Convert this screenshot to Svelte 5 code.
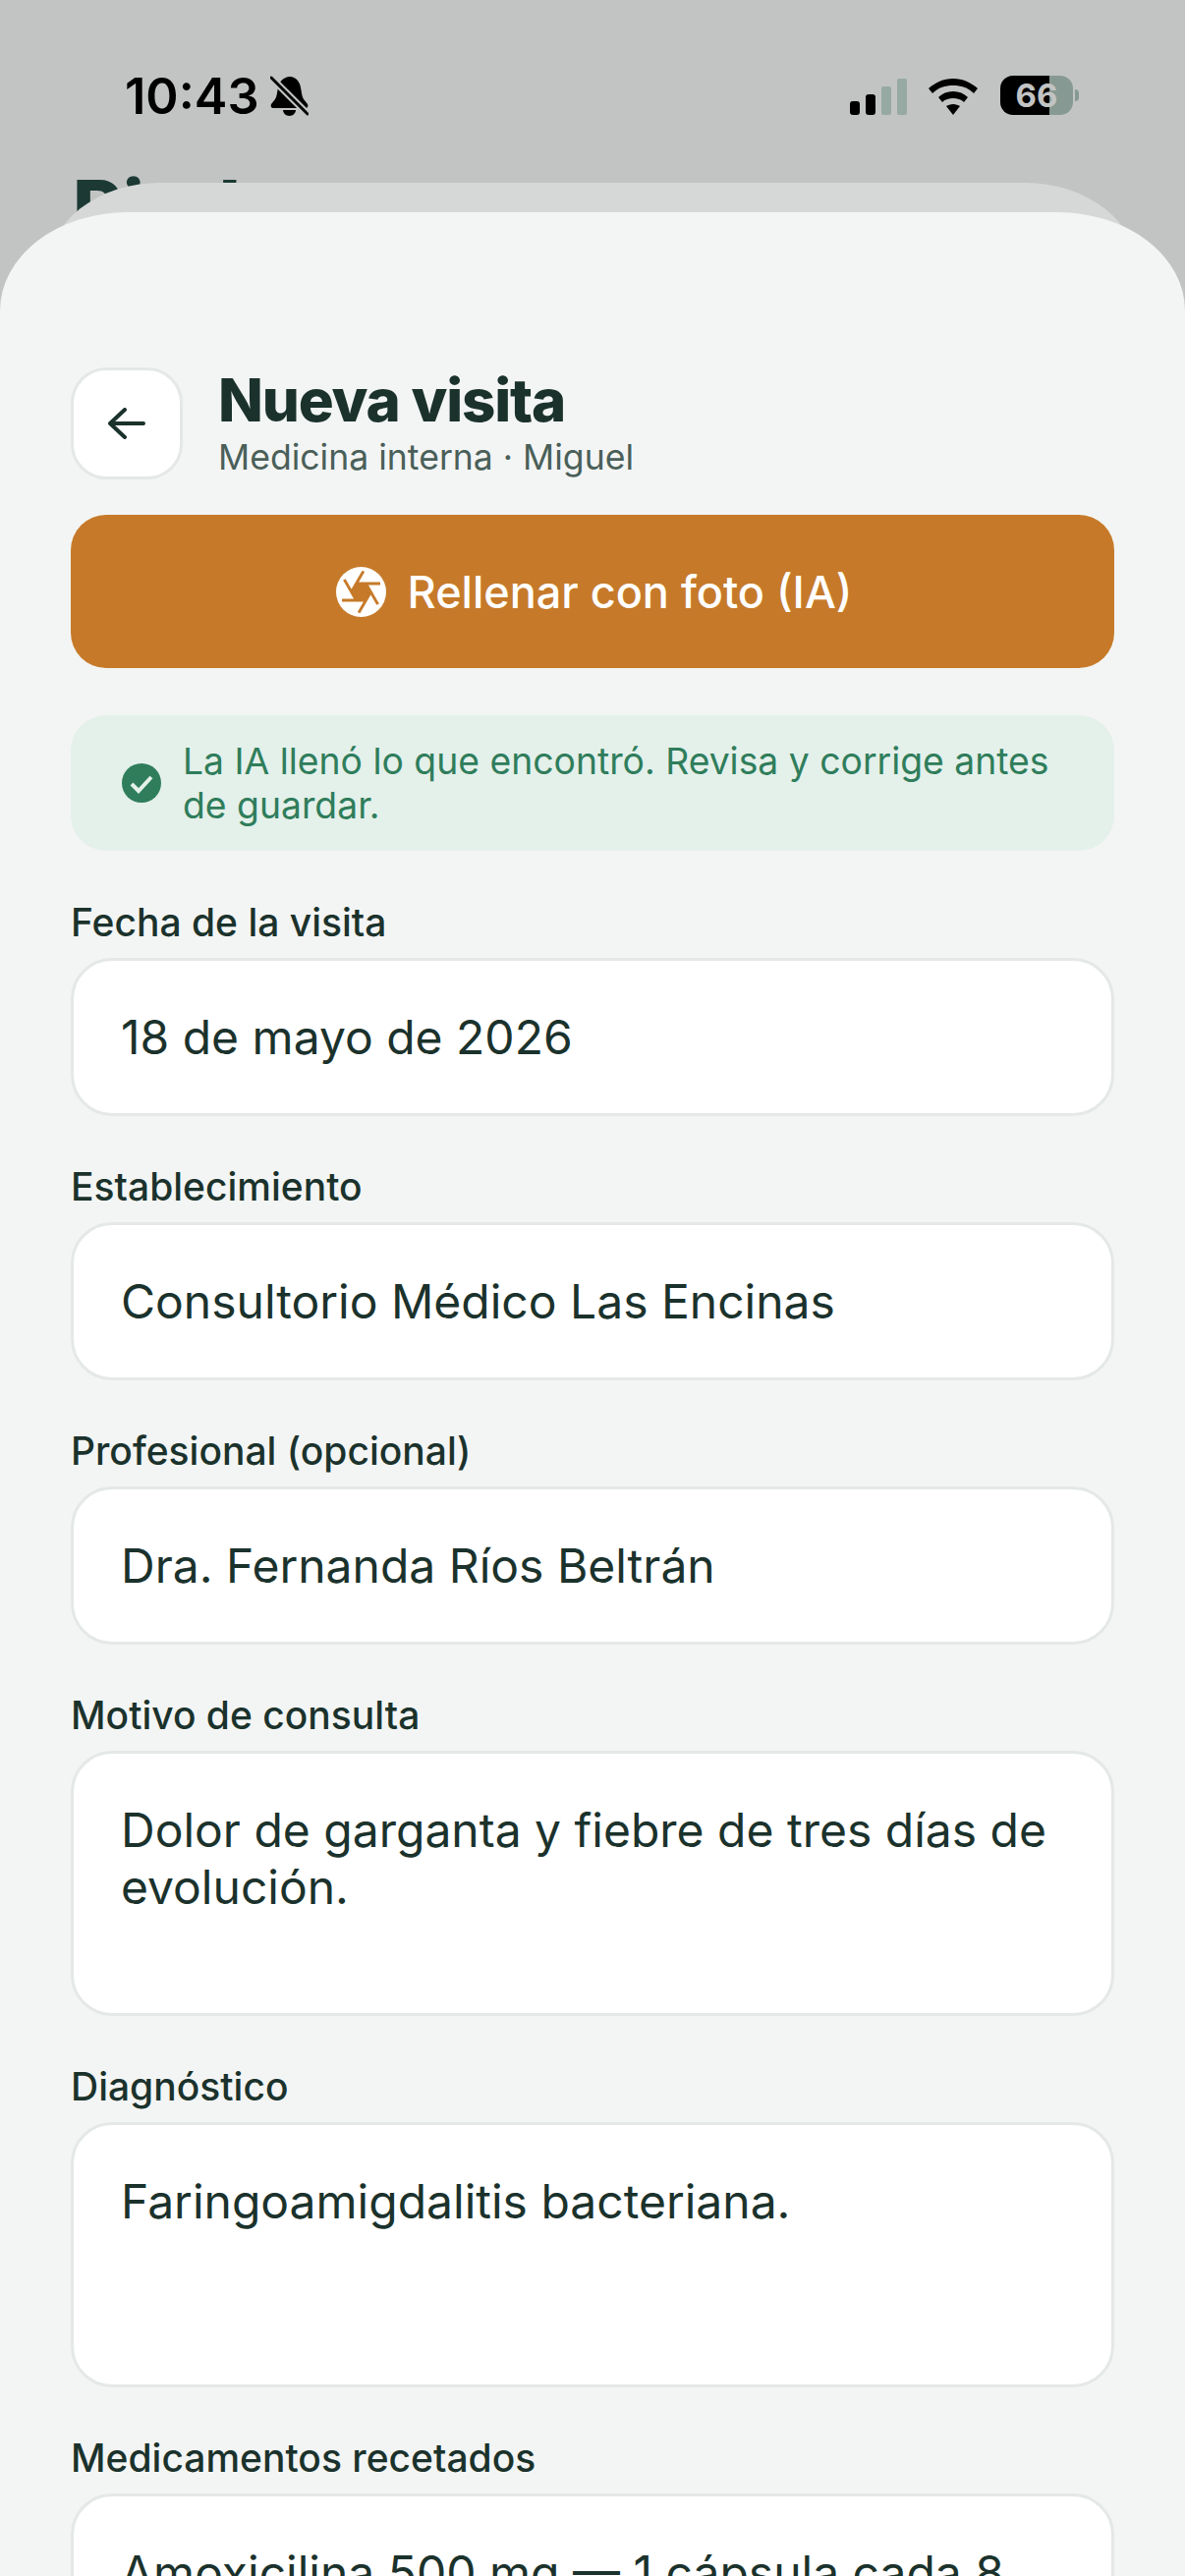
<script>
  const fields = [
    { label: "Fecha de la visita", value: "18 de mayo de 2026" },
    { label: "Establecimiento", value: "Consultorio Médico Las Encinas" },
    { label: "Profesional (opcional)", value: "Dra. Fernanda Ríos Beltrán" },
    { label: "Motivo de consulta", value: "Dolor de garganta y fiebre de tres días de evolución.", multi: true },
    { label: "Diagnóstico", value: "Faringoamigdalitis bacteriana.", multi: true },
    { label: "Medicamentos recetados", value: "Amoxicilina 500 mg — 1 cápsula cada 8 horas por 7 días.", multi: true },
  ];
</script>

<div class="screen">
  <header class="status">
    <div class="status-left">
      <span class="time">10:43</span>
      <svg class="bell" viewBox="0 0 39 41" width="39" height="41">
        <path d="M20 1c6 0 10 5 11 11 1 5 1 9 3 12l4 5c1 2 0 4-2 4H3c-2 0-3-2-2-4l4-5c2-3 2-8 3-12 1-6 6-11 12-11z" fill="#000" />
        <path d="M13 35h13c0 3-3 6-6.500 6S13 38 13 35z" fill="#000" />
        <path d="M1 2l37 37" stroke="#c2c4c3" stroke-width="7" />
        <path d="M1 2l37 37" stroke="#000" stroke-width="3" stroke-linecap="round" />
      </svg>
    </div>
    <div class="status-right">
      <svg viewBox="0 0 58 37" width="58" height="37">
        <rect x="0" y="23" width="10" height="14" rx="3" fill="#000" />
        <rect x="16" y="16" width="10" height="21" rx="3" fill="#000" />
        <rect x="32" y="8" width="10" height="29" rx="2" fill="#97a9a3" />
        <rect x="48" y="0" width="10" height="37" rx="2" fill="#97a9a3" />
      </svg>
      <svg class="wifi" viewBox="0 0 50 37" width="50" height="37">
        <path d="M25 0c10 0 18 4 25 10l-4 5C40 9 33 7 25 7S10 9 4 15L0 10C7 4 15 0 25 0z" fill="#000" />
        <path d="M25 13c6 0 11 2 15 6l-4 5c-3-3-7-4-11-4s-8 1-11 4l-4-5c4-4 9-6 15-6z" fill="#000" />
        <path d="M25 26c3 0 5 1 7 2l-7 9-7-9c2-1 4-2 7-2z" fill="#000" />
      </svg>
      <div class="battery">
        <div class="battery-body"><span>66</span></div>
        <div class="battery-cap"></div>
      </div>
    </div>
  </header>

  <h1 class="behind">Pitel</h1>
  <div class="sheet-back"></div>

  <section class="sheet">
    <div class="top">
      <button class="back" aria-label="Volver">
        <svg viewBox="0 0 38 32" width="38" height="32" fill="none" stroke="#1b322c" stroke-width="4" stroke-linecap="round" stroke-linejoin="round">
          <path d="M36 16H2M17 2 2 16l15 14" />
        </svg>
      </button>
      <div class="heading">
        <h2>Nueva visita</h2>
        <p>Medicina interna · Miguel</p>
      </div>
    </div>

    <button class="photo">
      <svg viewBox="0 0 24 24" width="51" height="51">
        <circle cx="12" cy="12" r="12" fill="#fff" />
        <polygon points="14.31,8 9.69,8 7.38,12 9.69,16 14.31,16 16.62,12" fill="#c67a29" />
        <g stroke="#c67a29" stroke-width="1.400" fill="none">
          <path d="m14.31 8 5.74 9.94M9.69 8h11.48M7.38 12l5.74-9.94M9.69 16 3.95 6.06M14.31 16H2.830M16.62 12l-5.74 9.94" />
        </g>
      </svg>
      <span>Rellenar con foto (IA)</span>
    </button>

    <div class="notice">
      <svg viewBox="0 0 40 40" width="40" height="40">
        <circle cx="20" cy="20" r="20" fill="#2f7d5b" />
        <path d="M10 21l7 7 13-14" fill="none" stroke="#e4f0ea" stroke-width="4" />
      </svg>
      <p>La IA llenó lo que encontró. Revisa y corrige antes de guardar.</p>
    </div>

    <form class="fields">
      {#each fields as f}
        <div class="field">
          <span class="label">{f.label}</span>
          <div class="input" class:multi={f.multi}>{f.value}</div>
        </div>
      {/each}
    </form>
  </section>
</div>

<style>
  :global(body) {
    margin: 0;
  }
  .screen {
    position: relative;
    width: 1206px;
    height: 2622px;
    overflow: hidden;
    background: #c2c4c3;
    font-family: Inter, "Noto Sans", sans-serif;
    color: #1b322c;
  }
  .status {
    display: flex;
    justify-content: space-between;
    padding: 77px 108px 0 127px;
  }
  .status-left {
    display: flex;
    align-items: center;
    gap: 11px;
  }
  .time {
    font-size: 50.500px;
    font-weight: 600;
    line-height: 41px;
    color: #000;
  }
  .status-right {
    display: flex;
    align-items: flex-end;
    height: 40px;
    gap: 22px;
  }
  .battery {
    display: flex;
    align-items: center;
    gap: 2px;
    margin-left: 1px;
  }
  .battery-body {
    width: 74px;
    height: 40px;
    border-radius: 13px;
    background: linear-gradient(90deg, #000 0 50px, #869a93 50px);
    text-align: center;
  }
  .battery-body span {
    font-size: 33px;
    font-weight: 700;
    line-height: 40px;
    color: #c2c4c3;
    display: block;
  }
  .battery-cap {
    width: 4px;
    height: 12px;
    border-radius: 0 4px 4px 0;
    background: #869a93;
  }
  .behind {
    position: absolute;
    left: 74px;
    top: 165px;
    margin: 0;
    font-size: 78px;
    font-weight: 800;
    line-height: 94px;
    color: #1c3a33;
  }
  .sheet-back {
    position: absolute;
    left: 48px;
    right: 48px;
    top: 186px;
    height: 200px;
    background: #d6d8d7;
    border-radius: 115px 115px 0 0 / 90px 90px 0 0;
  }
  .sheet {
    position: absolute;
    left: 0;
    right: 0;
    top: 216px;
    bottom: 0;
    background: #f3f5f4;
    border-radius: 130px 130px 0 0 / 100px 100px 0 0;
    padding: 157px 72px 0;
  }
  .top {
    display: flex;
    align-items: center;
    gap: 36px;
  }
  .back {
    width: 114px;
    height: 114px;
    flex: none;
    background: #fff;
    border: 3px solid #e4e8e7;
    border-radius: 36px;
    padding: 0;
    display: flex;
    align-items: center;
    justify-content: center;
  }
  .heading h2 {
    margin: 0;
    font-size: 60px;
    font-weight: 800;
    line-height: 68px;
    letter-spacing: -1.2px;
  }
  .heading p {
    margin: 2px 0 0;
    font-size: 35.600px;
    line-height: 46px;
    color: #4a5f59;
  }
  .photo {
    width: 100%;
    height: 156px;
    margin-top: 35px;
    padding: 0 0 0 3px;
    background: #c67a29;
    border: 0;
    border-radius: 36px;
    color: #fff;
    font: inherit;
    font-size: 45px;
    font-weight: 500;
    display: flex;
    align-items: center;
    justify-content: center;
    gap: 22px;
  }
  .notice {
    margin-top: 48px;
    height: 138px;
    box-sizing: border-box;
    background: #e4f0ea;
    border-radius: 36px;
    padding: 0 52px;
    display: flex;
    align-items: center;
    gap: 22px;
    color: #2f7d5b;
    font-size: 37.300px;
    line-height: 45px;
  }
  .notice svg {
    flex: none;
  }
  .notice p {
    margin: 0;
  }
  .fields {
    margin-top: 48px;
    display: flex;
    flex-direction: column;
    gap: 47px;
  }
  .field {
    display: flex;
    flex-direction: column;
    gap: 12px;
  }
  .label {
    font-size: 39px;
    font-weight: 500;
    line-height: 49px;
  }
  .input {
    box-sizing: border-box;
    height: 161px;
    background: #fff;
    border: 3px solid #e4e8e7;
    border-radius: 42px;
    padding: 0 48px;
    font-size: 48px;
    line-height: 58px;
    display: flex;
    align-items: center;
  }
  .input.multi {
    height: 270px;
    padding-top: 49px;
    align-items: flex-start;
  }
</style>
